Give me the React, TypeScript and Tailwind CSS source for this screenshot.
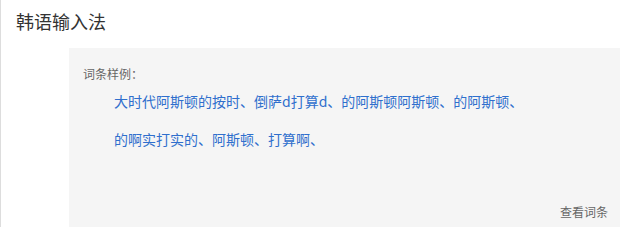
const examples = [
  "大时代阿斯顿的按时、倒萨d打算d、的阿斯顿阿斯顿、的阿斯顿、",
  "的啊实打实的、阿斯顿、打算啊、",
];

export default function App() {
  return (
    <div
      className="flex h-[227px] w-[620px] flex-col overflow-hidden border-l border-[#dddddd] bg-white"
      style={{ fontFamily: '"Microsoft YaHei", "Noto Sans CJK SC", "Noto Sans", sans-serif' }}
    >
      <h2 className="pl-[15px] pt-[8px] text-[18px] leading-[26px] text-[#333333]">韩语输入法</h2>

      <div className="ml-[68px] mt-[14px] flex h-[179px] flex-col bg-[#f5f5f5]">
        <div className="pl-[14px] pt-[18px] text-[12px] leading-[16px] text-[#666666]">词条样例：</div>
        <div className="pl-[45px]">
          {examples.map((line) => (
            <p key={line} className="text-[14px] leading-[38px] text-[#2f6fcd]">
              {line}
            </p>
          ))}
        </div>
        <div className="mt-auto pb-[7px] pr-[12px] text-right text-[12px] leading-[16px] text-[#666666]">
          查看词条
        </div>
      </div>
    </div>
  );
}
